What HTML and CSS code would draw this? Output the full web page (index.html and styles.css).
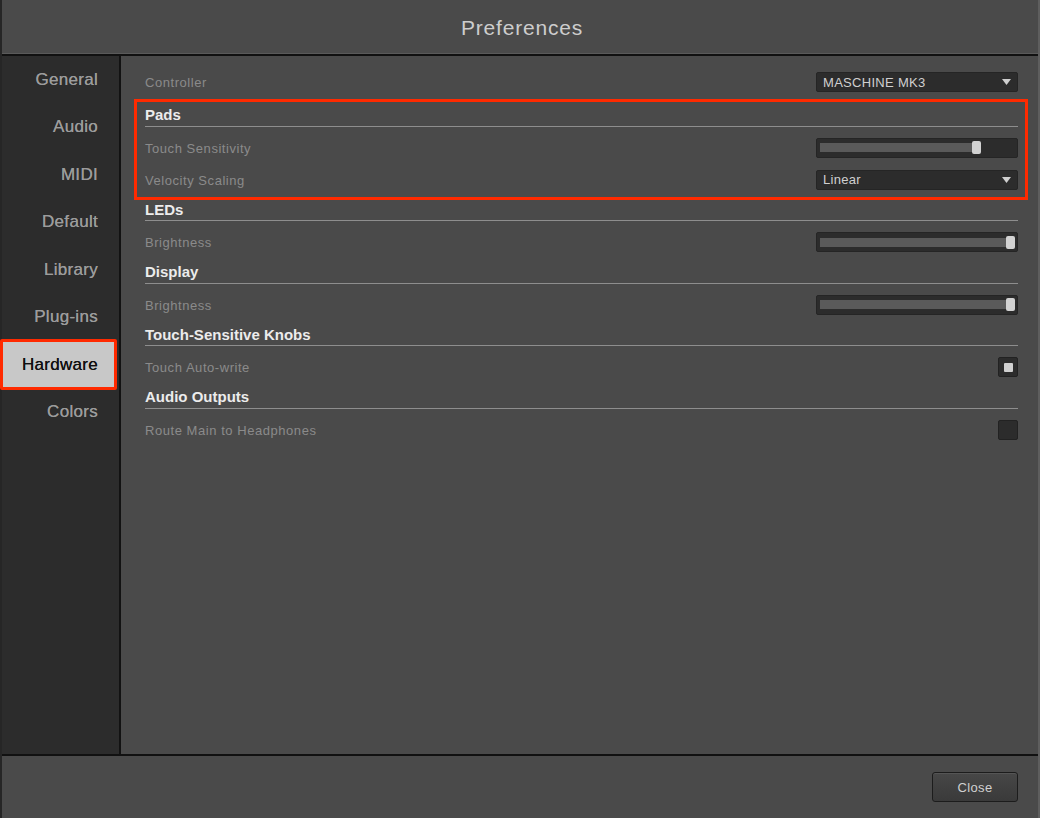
FILE: index.html
```html
<!DOCTYPE html>
<html>
<head>
<meta charset="utf-8">
<title>Preferences</title>
<link rel="stylesheet" href="styles.css">
</head>
<body>
<div class="window">
  <header class="titlebar">Preferences</header>
  <div class="main">
    <nav class="sidebar">
      <div class="nav-item">General</div>
      <div class="nav-item">Audio</div>
      <div class="nav-item">MIDI</div>
      <div class="nav-item">Default</div>
      <div class="nav-item">Library</div>
      <div class="nav-item">Plug-ins</div>
      <div class="nav-item selected">Hardware</div>
      <div class="nav-item">Colors</div>
    </nav>
    <section class="content">
      <div class="row first">
        <span class="label">Controller</span>
        <div class="dropdown"><span>MASCHINE MK3</span><svg class="arrow" width="9" height="6" viewBox="0 0 9 6"><path d="M0 0H9L4.5 6Z" fill="#cfcfcf"/></svg></div>
      </div>

      <div class="group highlighted">
        <div class="group-title">Pads</div>
        <div class="row">
          <span class="label">Touch Sensitivity</span>
          <div class="slider"><div class="fill" style="width:152px"></div><div class="thumb"></div></div>
        </div>
        <div class="row">
          <span class="label">Velocity Scaling</span>
          <div class="dropdown"><span>Linear</span><svg class="arrow" width="9" height="6" viewBox="0 0 9 6"><path d="M0 0H9L4.5 6Z" fill="#cfcfcf"/></svg></div>
        </div>
      </div>

      <div class="group">
        <div class="group-title">LEDs</div>
        <div class="row">
          <span class="label">Brightness</span>
          <div class="slider"><div class="fill" style="width:186px"></div><div class="thumb"></div></div>
        </div>
      </div>

      <div class="group">
        <div class="group-title">Display</div>
        <div class="row">
          <span class="label">Brightness</span>
          <div class="slider"><div class="fill" style="width:186px"></div><div class="thumb"></div></div>
        </div>
      </div>

      <div class="group">
        <div class="group-title">Touch-Sensitive Knobs</div>
        <div class="row">
          <span class="label">Touch Auto-write</span>
          <div class="checkbox checked"><div class="mark"></div></div>
        </div>
      </div>

      <div class="group">
        <div class="group-title">Audio Outputs</div>
        <div class="row">
          <span class="label">Route Main to Headphones</span>
          <div class="checkbox"></div>
        </div>
      </div>
    </section>
  </div>
  <footer class="footer">
    <button class="btn">Close</button>
  </footer>
</div>
</body>
</html>
```

FILE: styles.css
```css
* { box-sizing: border-box; }

html, body {
  margin: 0;
  padding: 0;
  background: #4a4a4a;
  font-family: "Liberation Sans", Arial, sans-serif;
}

.window {
  width: 1040px;
  height: 818px;
  display: flex;
  flex-direction: column;
  border-left: 2px solid #262626;
  border-right: 2px solid #5e5e5e;
  background: #4a4a4a;
}

.titlebar {
  height: 56px;
  line-height: 56px;
  text-align: center;
  font-size: 21px;
  letter-spacing: 0.8px;
  color: #cdcdcd;
  background: #4a4a4a;
  border-bottom: 2px solid #111;
  box-shadow: inset 0 -1px 0 #5a5a5a;
  padding-left: 4px;
}

.main {
  flex: 1;
  display: flex;
  min-height: 0;
}

.sidebar {
  width: 119px;
  background: #2c2c2c;
  border-right: 2px solid #121212;
}

.nav-item {
  height: 47.4px;
  line-height: 48px;
  text-align: right;
  padding-right: 21px;
  font-size: 17px;
  letter-spacing: 0.3px;
  color: #9c9c9c;
  text-shadow: 0 0 0.3px #9c9c9c;
}

.nav-item.selected {
  height: 51px;
  line-height: 45px;
  margin: -1px 2px -2.6px -2px;
  padding-right: 16px;
  background: #c8c8c8;
  border: 3px solid #ff2a00;
  border-radius: 2px;
  color: #111;
  text-shadow: 0 0 0.3px #111;
}

.content {
  flex: 1;
  padding: 10px 20px 0 24px;
}

.row {
  height: 32px;
  display: flex;
  align-items: center;
  justify-content: space-between;
}

.row.first {
  margin-bottom: 3px;
}

.label {
  font-size: 13px;
  letter-spacing: 0.55px;
  color: #8b8b8b;
  padding-top: 1px;
}

.group {
  position: relative;
}

.group.highlighted::after {
  content: "";
  position: absolute;
  top: -2px;
  left: -11px;
  right: -10px;
  bottom: -4px;
  border: 3px solid #ff2a00;
  pointer-events: none;
}

.group-title {
  padding: 6px 0 2.6px;
  line-height: 16px;
  font-size: 15px;
  font-weight: bold;
  color: #ececec;
  border-bottom: 1px solid #8e8e8e;
  margin-bottom: 5px;
}

.dropdown {
  width: 202px;
  height: 20px;
  display: flex;
  align-items: center;
  justify-content: space-between;
  padding: 0 6px 0 6px;
  background: #2c2c2c;
  border: 1px solid #252525;
  border-radius: 2px;
  font-size: 13px;
  letter-spacing: 0.3px;
  color: #d0d0d0;
}

.arrow {
  display: block;
}

.slider {
  width: 202px;
  height: 20px;
  display: flex;
  align-items: center;
  padding-left: 3px;
  background: #2c2c2c;
  border: 1px solid #252525;
  border-radius: 2px;
}

.fill {
  height: 9px;
  background: #5a5a5a;
}

.thumb {
  width: 9px;
  height: 13px;
  background: #d2d2d2;
  border-radius: 2px;
}

.checkbox {
  width: 20px;
  height: 20px;
  display: flex;
  align-items: center;
  justify-content: center;
  background: #2c2c2c;
  border: 1px solid #222;
  border-radius: 2px;
}

.mark {
  width: 9px;
  height: 9px;
  background: #d0d0d0;
  border-radius: 1px;
}

.footer {
  height: 64px;
  border-top: 2px solid #111;
  display: flex;
  justify-content: flex-end;
  align-items: flex-start;
  padding: 16px 20px 0 0;
  background: #4a4a4a;
}

.btn {
  width: 86px;
  height: 30px;
  background: linear-gradient(#474747, #3a3a3a);
  border: 1px solid #1c1c1c;
  border-radius: 3px;
  box-shadow: inset 0 1px 0 #555;
  font-family: "Liberation Sans", Arial, sans-serif;
  font-size: 13px;
  letter-spacing: 0.4px;
  color: #d0d0d0;
  padding: 0;
}
```
